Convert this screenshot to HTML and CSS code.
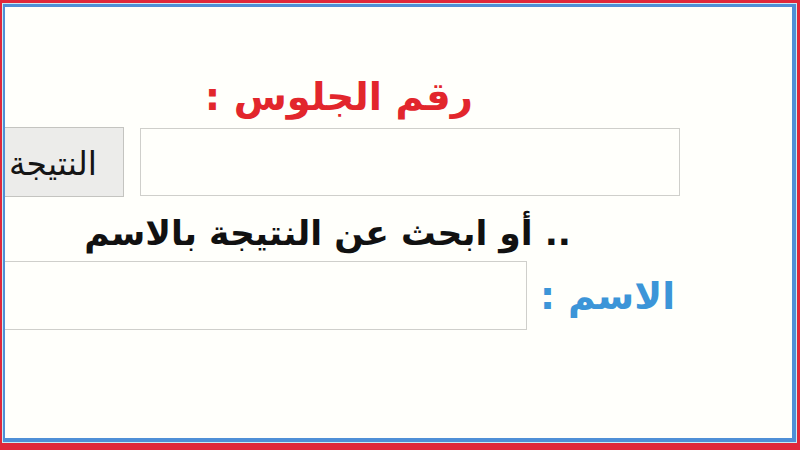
FILE: index.html
```html
<!DOCTYPE html>
<html lang="ar" dir="rtl">
<head>
<meta charset="utf-8">
<link rel="stylesheet" href="styles.css">
</head>
<body>
<div class="frame">
  <div class="inner">
    <div class="row title-row">
      <div class="title">رقم الجلوس :</div>
    </div>
    <div class="row seat-row">
      <div class="field seat-field"></div>
      <div class="btn">النتيجة</div>
    </div>
    <div class="row hint-row">
      <div class="hint">.. أو ابحث عن النتيجة بالاسم</div>
    </div>
    <div class="row name-row">
      <div class="label">الاسم :</div>
      <div class="field name-field"></div>
    </div>
  </div>
</div>
</body>
</html>
```
FILE: styles.css
```css
html, body {
  margin: 0;
  padding: 0;
  background: #fffffb;
}
.frame {
  width: 800px;
  height: 450px;
  box-sizing: border-box;
  border-style: solid;
  border-color: #e0283a;
  border-width: 3px 3px 7px 2px;
  overflow: hidden;
}
.inner {
  box-sizing: border-box;
  height: 100%;
  border-style: solid;
  border-color: #4f8fd6;
  border-width: 4px 5px 5px 3px;
  outline: 1px solid #c7ecf5;
  outline-offset: -1px;
  background: #fffffb;
  overflow: hidden;
  font-family: "DejaVu Sans", sans-serif;
  direction: rtl;
}
.row {
  display: flex;
  align-items: center;
}
.title-row {
  margin-top: 60px;
  height: 60px;
  padding-right: 319px;
}
.title {
  color: #e2262c;
  font-weight: bold;
  font-size: 38.5px;
  line-height: 60px;
  white-space: nowrap;
}
.seat-row {
  height: 70px;
  padding-right: 112px;
  gap: 16px;
}
.field {
  box-sizing: border-box;
  border: 1px solid #cfcfcb;
  background: #fffffb;
  flex: none;
}
.seat-field {
  width: 540px;
  height: 68px;
}
.btn {
  box-sizing: border-box;
  flex: none;
  width: 140px;
  height: 70px;
  background: #ececea;
  border: 1px solid #c4c4c0;
  font-size: 33px;
  line-height: 72px;
  padding-right: 26px;
  color: #151515;
  white-space: nowrap;
}
.hint-row {
  height: 64px;
  padding-right: 221px;
  padding-top: 8px;
  box-sizing: border-box;
}
.hint {
  font-weight: bold;
  font-size: 34.6px;
  color: #111;
  white-space: nowrap;
}
.name-row {
  height: 69px;
  padding-right: 117px;
  gap: 13px;
}
.label {
  color: #3c95d8;
  font-weight: bold;
  font-size: 37.5px;
  white-space: nowrap;
  flex: none;
}
.name-field {
  width: 560px;
  height: 69px;
}
```
